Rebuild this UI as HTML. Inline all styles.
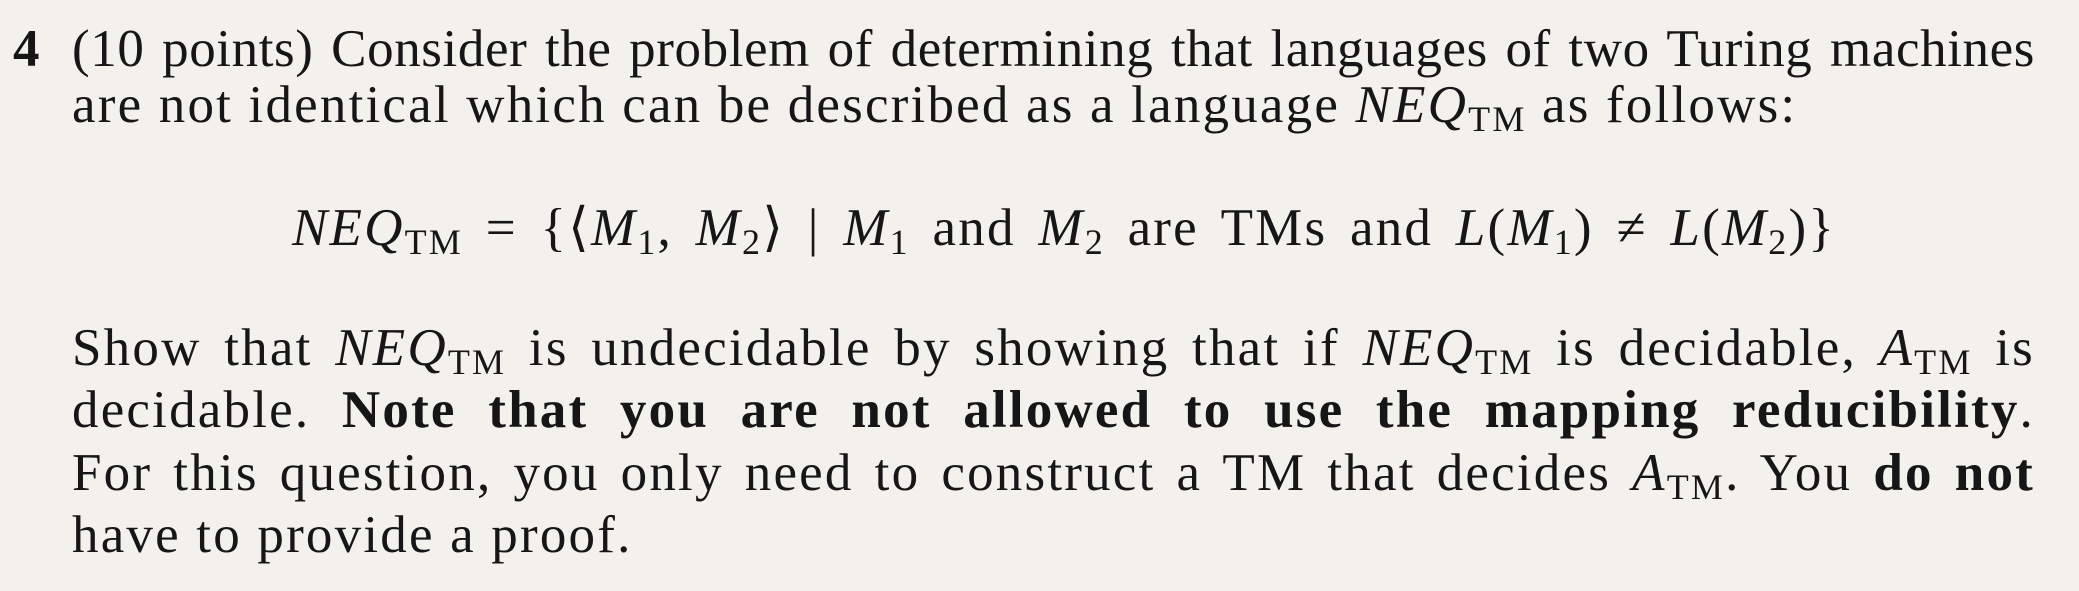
<!DOCTYPE html>
<html><head><meta charset="utf-8"><style>
html,body{margin:0;padding:0}
body{width:2079px;height:591px;background:#f3f1eb;position:relative;overflow:hidden;font-family:"Liberation Serif",serif;font-size:53px;color:#161616;letter-spacing:2.2px}
.l{position:absolute;white-space:nowrap;line-height:63px;height:63px}
.j{text-align:justify;text-align-last:justify}
i{font-style:italic}
sub{font-size:36px;vertical-align:-9px;line-height:0;font-style:normal}
b{font-weight:bold}
</style></head><body>
<div class="l" style="left:13px;top:18px"><b>4</b></div>
<div class="l j" style="left:72px;top:18px;width:1963px;letter-spacing:0.6px">(10 points) Consider the problem of determining that languages of two Turing machines</div>
<div class="l" style="left:72px;top:74px">are not identical which can be described as a language <i>NEQ</i><sub>TM</sub> as follows:</div>
<div class="l j" style="left:292px;top:197px;width:1544px"><i>NEQ</i><sub>TM</sub> = {⟨<i>M</i><sub>1</sub>, <i>M</i><sub>2</sub>⟩ | <i>M</i><sub>1</sub> and <i>M</i><sub>2</sub> are TMs and <i>L</i>(<i>M</i><sub>1</sub>) ≠ <i>L</i>(<i>M</i><sub>2</sub>)}</div>
<div class="l j" style="left:72px;top:317px;width:1963px">Show that <i>NEQ</i><sub>TM</sub> is undecidable by showing that if <i>NEQ</i><sub>TM</sub> is decidable, <i>A</i><sub>TM</sub> is</div>
<div class="l j" style="left:72px;top:379px;width:1963px">decidable. <b>Note that you are not allowed to use the mapping reducibility</b>.</div>
<div class="l j" style="left:72px;top:442px;width:1963px">For this question, you only need to construct a TM that decides <i>A</i><sub>TM</sub>. You <b>do not</b></div>
<div class="l" style="left:72px;top:504px">have to provide a proof.</div>
</body></html>
